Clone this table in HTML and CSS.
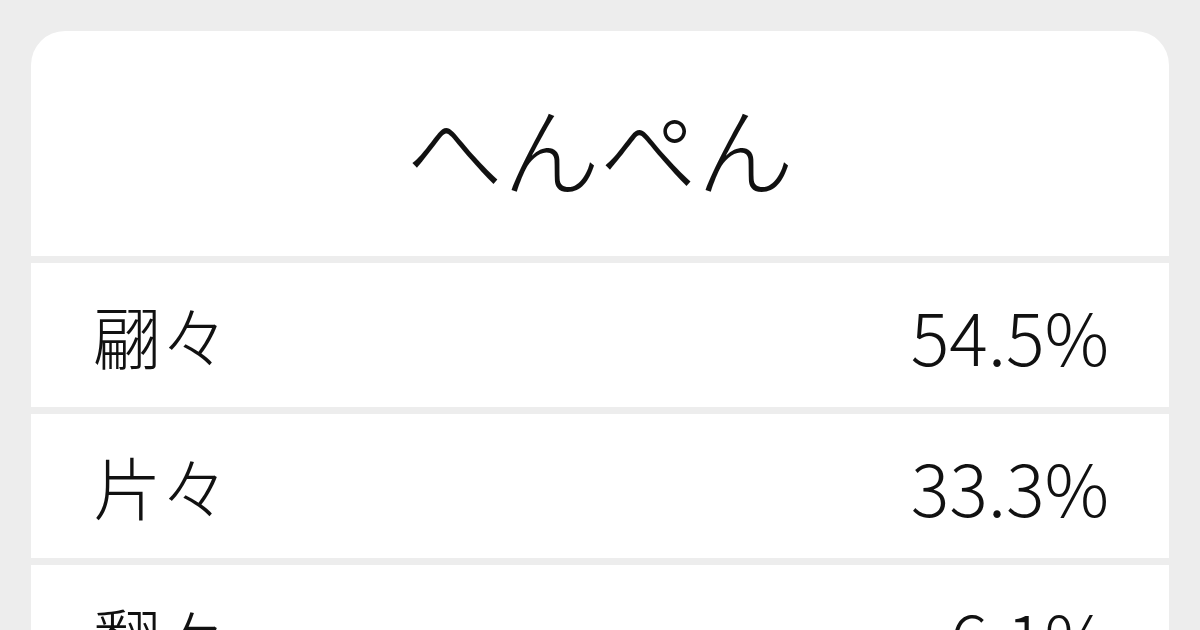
FILE: index.html
```html
<!DOCTYPE html>
<html lang="ja">
<head>
<meta charset="utf-8">
<link rel="stylesheet" href="styles.css">
</head>
<body>
<div class="card">
  <div class="head"><span class="title">へんぺん</span></div>
  <div class="row"><span class="word">翩々</span><span class="pct">54.5%</span></div>
  <div class="row"><span class="word">片々</span><span class="pct">33.3%</span></div>
  <div class="row"><span class="word">翻々</span><span class="pct">6.1%</span></div>
</div>
</body>
</html>
```
FILE: styles.css
```css
html, body {
  margin: 0;
  padding: 0;
}
body {
  background: #ededed;
  width: 1200px;
  height: 630px;
  overflow: hidden;
  font-family: "Noto Sans CJK JP", "Noto Sans", sans-serif;
  color: #111;
}
.card {
  margin: 31px 31px 0;
  border-radius: 34px 34px 0 0;
  overflow: hidden;
  display: flex;
  flex-direction: column;
  gap: 7px;
}
.head {
  background: #fff;
  height: 225px;
  padding-top: 4px;
  box-sizing: border-box;
  display: flex;
  align-items: center;
  justify-content: center;
  font-size: 97px;
  font-weight: 300;
  line-height: 1;
}
.row {
  background: #fff;
  height: 144px;
  flex: none;
  padding: 0 60px 0 62px;
  display: flex;
  align-items: center;
  justify-content: space-between;
  font-weight: 300;
  line-height: 1;
}
.word {
  font-size: 68px;
}
.pct {
  font-size: 72px;
}
```
